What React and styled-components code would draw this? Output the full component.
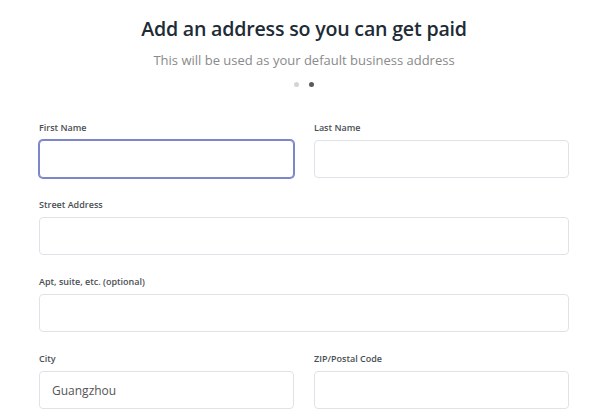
import React from "react";
import styled, { createGlobalStyle } from "styled-components";

const GlobalStyle = createGlobalStyle`
  body {
    margin: 0;
    background: #ffffff;
    font-family: "Open Sans", "Noto Sans", sans-serif;
  }
`;

const Page = styled.div`
  width: 600px;
  height: 418px;
  overflow: hidden;
  padding: 0 31px 0 39px;
  box-sizing: border-box;
`;

const Header = styled.div`
  display: flex;
  flex-direction: column;
  align-items: center;
  padding-top: 15px;
`;

const Title = styled.h1`
  margin: 0;
  font-size: 19.6px;
  line-height: 28px;
  font-weight: 600;
  color: #212b36;
  letter-spacing: -0.2px;
`;

const Subtitle = styled.p`
  margin: 8px 0 0;
  font-size: 13px;
  line-height: 18px;
  color: #8a8a8a;
`;

const Dots = styled.div`
  display: flex;
  gap: 10px;
  margin-top: 13px;
`;

const Dot = styled.span`
  width: 5px;
  height: 5px;
  border-radius: 50%;
  background: ${(p) => (p.$active ? "#5a5a5a" : "#d4d4d4")};
`;

const Form = styled.div`
  display: grid;
  grid-template-columns: 1fr 1fr;
  column-gap: 20px;
  row-gap: 21px;
  margin-top: 35px;
`;

const Field = styled.label`
  display: flex;
  flex-direction: column;
  gap: 6px;
  grid-column: ${(p) => (p.$wide ? "1 / -1" : "auto")};
`;

const Label = styled.span`
  font-size: 9px;
  line-height: 12px;
  font-weight: 600;
  color: #4a4f54;
`;

const Input = styled.input`
  box-sizing: border-box;
  height: 38px;
  width: 100%;
  border: 1px solid ${(p) => (p.$focused ? "#7c86c9" : "#dfe3e8")};
  box-shadow: ${(p) => (p.$focused ? "0 0 0 1px #7c86c9" : "none")};
  border-radius: 4px;
  padding: 0 12px;
  font-family: inherit;
  font-size: 12px;
  color: #555;
  background: #fff;
  outline: none;
`;

const fields = [
  { label: "First Name", focused: true },
  { label: "Last Name" },
  { label: "Street Address", wide: true },
  { label: "Apt, suite, etc. (optional)", wide: true },
  { label: "City", value: "Guangzhou" },
  { label: "ZIP/Postal Code" },
];

export default function App() {
  return (
    <>
      <GlobalStyle />
      <Page>
        <Header>
          <Title>Add an address so you can get paid</Title>
          <Subtitle>This will be used as your default business address</Subtitle>
          <Dots>
            <Dot />
            <Dot $active />
          </Dots>
        </Header>
        <Form>
          {fields.map((f) => (
            <Field key={f.label} $wide={f.wide}>
              <Label>{f.label}</Label>
              <Input
                $focused={f.focused}
                defaultValue={f.value || ""}
                readOnly
              />
            </Field>
          ))}
        </Form>
      </Page>
    </>
  );
}
